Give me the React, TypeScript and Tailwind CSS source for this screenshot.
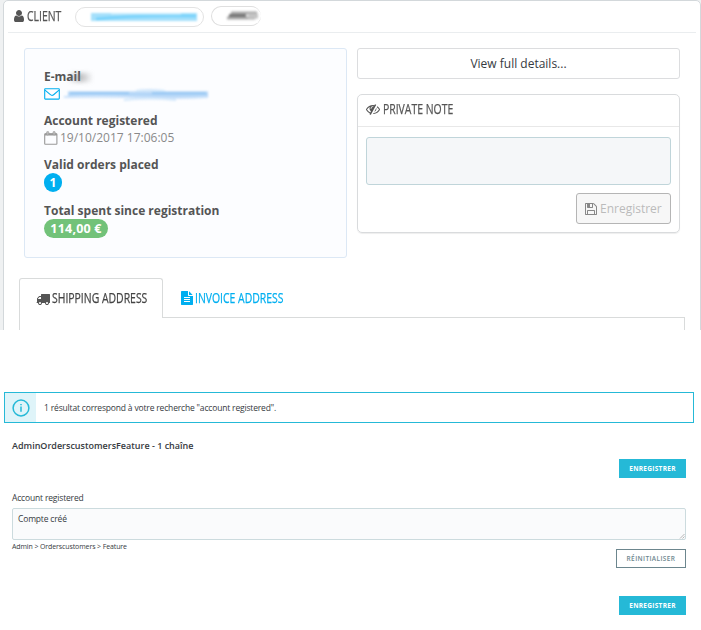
import type { ReactNode } from "react";
import clsx from "clsx";

const ICONS = {
  user: "M1536 1399q0 109-62.5 187t-150.5 78h-854q-88 0-150.5-78t-62.5-187q0-85 8.5-160.5t31.5-152 58.5-131 94-89 134.5-34.5q131 128 313 128t313-128q76 0 134.5 34.5t94 89 58.5 131 31.5 152 8.5 160.5zm-256-887q0 159-112.5 271.5t-271.5 112.5-271.5-112.5-112.5-271.5 112.5-271.5 271.5-112.5 271.5 112.5 112.5 271.5z",
  truck: "M640 1408q0-52-38-90t-90-38-90 38-38 90 38 90 90 38 90-38 38-90zm-384-512h384v-256h-158q-13 0-22 9l-195 195q-9 9-9 22v30zm1280 512q0-52-38-90t-90-38-90 38-38 90 38 90 90 38 90-38 38-90zm256-1088v1024q0 15-4 26.5t-13.5 18.5-16.5 11.5-23.5 6-22.5 2-25.5 0-22.5-.5q0 106-75 181t-181 75-181-75-75-181h-384q0 106-75 181t-181 75-181-75-75-181h-64q-3 0-22.5.5t-25.5 0-22.5-2-23.5-6-16.5-11.5-13.5-18.5-4-26.5q0-26 19-45t45-19v-320q0-8-.5-35t0-38 2.5-34.5 6.5-37 14-30.5 22.5-30l198-198q19-19 50.5-32t58.5-13h160v-192q0-26 19-45t45-19h1024q26 0 45 19t19 45z",
  save: "M512 1536h768v-384h-768v384zm896 0h128v-896q0-14-10-38.5t-20-34.5l-281-281q-10-10-34-20t-39-10v416q0 40-28 68t-68 28h-576q-40 0-68-28t-28-68v-416h-128v1280h128v-416q0-40 28-68t68-28h832q40 0 68 28t28 68v416zm-384-928v-320q0-13-9.5-22.5t-22.5-9.5h-192q-13 0-22.5 9.5t-9.5 22.5v320q0 13 9.5 22.5t22.5 9.5h192q13 0 22.5-9.5t9.5-22.5zm640 32v928q0 40-28 68t-68 28h-1344q-40 0-68-28t-28-68v-1344q0-40 28-68t68-28h928q40 0 88 20t76 48l280 280q28 28 48 76t20 88z",
  file: "M1596 476q14 14 28 36h-472v-472q22 14 36 28zm-476 164h544v1056q0 40-28 68t-68 28h-1344q-40 0-68-28t-28-68v-1600q0-40 28-68t68-28h800v544q0 40 28 68t68 28zm160 736v-64q0-14-9-23t-23-9h-704q-14 0-23 9t-9 23v64q0 14 9 23t23 9h704q14 0 23-9t9-23zm0-256v-64q0-14-9-23t-23-9h-704q-14 0-23 9t-9 23v64q0 14 9 23t23 9h704q14 0 23-9t9-23zm0-256v-64q0-14-9-23t-23-9h-704q-14 0-23 9t-9 23v64q0 14 9 23t23 9h704q14 0 23-9t9-23z",
  eyeOff: "M555 1335l78-141q-87-63-136-159t-49-203q0-121 61-225-229 117-381 353 167 258 427 375zm389-759q0-20-14-34t-34-14q-125 0-214.5 89.5t-89.5 214.5q0 20 14 34t34 14 34-14 14-34q0-86 61-147t147-61q20 0 34-14t14-34zm363-191q0 7-1 9-106 189-316 567t-315 566l-49 89q-10 16-28 16-12 0-134-70-16-10-16-28 0-12 44-87-143-65-263.5-173t-208.5-245q-20-31-20-69t20-69q153-235 380-371t496-136q89 0 180 17l54-97q10-16 28-16 5 0 18 6t31 15.5 33 18.5 31.5 18.5 19.5 11.5q16 10 16 27zm37 447q0 139-79 253.5t-209 164.5l280-502q8 45 8 84zm448 128q0 35-20 69-39 64-109 145-150 172-347.5 267t-419.5 95l74-132q212-18 392.5-137t301.5-307q-115-179-282-294l63-112q95 64 182.5 153t144.5 184q20 34 20 69z",
};

function Icon({ name, className }: { name: keyof typeof ICONS; className?: string }) {
  return (
    <svg viewBox="0 0 1792 1792" fill="currentColor" className={clsx("shrink-0", className)}>
      <path d={ICONS[name]} />
    </svg>
  );
}

// Narrow uppercase title, squeezed horizontally
function Condensed({ children, className }: { children: ReactNode; className?: string }) {
  return (
    <span className={clsx("block", className)}>
      <span className="inline-block origin-left scale-x-[0.745] whitespace-nowrap text-[14px] font-medium leading-5 [-webkit-text-stroke:0.25px_currentColor]">
        {children}
      </span>
    </span>
  );
}

function SaveButton() {
  return (
    <button className="h-[19px] w-[67px] bg-[#25b9d7] text-center text-[6.5px] font-bold leading-[19px] tracking-[0.3px] text-white">
      ENREGISTRER
    </button>
  );
}

function Label({ children, className }: { children: ReactNode; className?: string }) {
  return <div className={clsx("h-[18px] font-bold leading-5", className)}>{children}</div>;
}

function CustomerInfo() {
  return (
    <div className="h-[210px] w-[323px] rounded-[3px] border border-[#dce8f5] bg-[#fcfdff] pl-[19px] pt-[18px] text-[12px] leading-[18px] text-[#555]">
      <div className="relative w-[60px]">
        <Label>E-mail</Label>
        <span className="absolute left-[23px] top-[6px] h-[9px] w-[26px] bg-gradient-to-r from-transparent via-[#777]/50 to-transparent blur-[2px]" />
      </div>
      <div className="flex h-[18px] items-center">
        <svg viewBox="0 0 16 12" className="h-3 w-4" fill="none" stroke="#00aff0" strokeWidth="1.1">
          <rect x="0.7" y="0.7" width="14.6" height="10.4" rx="0.6" />
          <path d="M1 2.2 6.4 6.7Q8 8 9.6 6.7L15 2.2" />
        </svg>
        <svg viewBox="0 0 150 14" className="ml-1 h-[14px] w-[150px] overflow-visible" fill="none">
          <g className="blur-[0.8px]">
            <path d="M4 7.5H144" stroke="#b4d6f7" strokeWidth="6" />
            <path d="M0 10Q30 8 70 10T143 10" stroke="#cbe2fb" strokeWidth="2" />
            <path d="M6 6H65M88 6H142" stroke="#86c0f2" strokeWidth="1.5" />
            <path d="M72 4Q84 2 101 4M60 13Q86 10 112 13" stroke="#d3e8fb" strokeWidth="2" />
          </g>
        </svg>
      </div>

      <Label className="mt-2">Account registered</Label>
      <div className="flex h-[18px] items-center text-[#8a8a8a]">
        <svg viewBox="0 0 14 14" className="mr-[2px] h-[14px] w-[14px]">
          <rect x="0.7" y="2.7" width="12.2" height="10.6" rx="0.6" fill="none" stroke="#999" strokeWidth="1.1" />
          <path d="M1 2.5h12v2H1z" fill="#999" />
          <rect x="2.6" y="0.4" width="2.2" height="3.6" rx="1" fill="#bbb" stroke="#999" strokeWidth="0.6" />
          <rect x="9" y="0.4" width="2.2" height="3.6" rx="1" fill="#bbb" stroke="#999" strokeWidth="0.6" />
        </svg>
        19/10/2017 17:06:05
      </div>

      <Label className="mt-2">Valid orders placed</Label>
      <div className="flex h-[19px] w-[18px] items-center justify-center rounded-full bg-[#00aff0] text-[12px] font-bold text-white">1</div>

      <Label className="mt-[9px]">Total spent since registration</Label>
      <div className="flex h-[19px] w-16 items-center justify-center rounded-full bg-[#72c279] text-[12.5px] font-bold tracking-[0.2px] text-white">114,00 €</div>
    </div>
  );
}

function PrivateNote() {
  return (
    <div className="mt-[15px] h-[139px] w-[323px] rounded-[5px] border border-[#d9dbdd] shadow-[0_1px_1px_#eee]">
      <div className="flex h-8 items-center border-b border-[#e8e8e8] pl-2 text-[#555]">
        <Icon name="eyeOff" className="mb-[3px] mr-[3px] h-[14px] w-[14px]" />
        <Condensed className="pb-[5px]">PRIVATE NOTE</Condensed>
      </div>
      <div className="flex flex-col items-end px-2 pt-[10px]">
        <div className="h-12 w-[305px] rounded-[3px] border border-[#c0d5da] bg-[#f5f7f9]" />
        <button className="mt-2 flex h-[31px] w-[95px] items-center rounded-[3px] border border-[#b5b5b5] bg-[#f7f7f7] pl-[7px] text-[12px] text-[#bbb]">
          <Icon name="save" className="mr-[2px] h-[14px] w-[14px] text-[#888]" />
          Enregistrer
        </button>
      </div>
    </div>
  );
}

function ClientPanel() {
  return (
    <section className="h-[330px] overflow-hidden bg-[#eff1f2] pl-[3px]">
      <div className="h-[340px] w-[698px] rounded-[5px] border border-[#d3d8db] bg-white">
        <header className="mx-1 flex h-8 items-center border-b border-[#eaedef] pl-[5px] text-[#555]">
          <Icon name="user" className="-ml-px mb-[2px] mr-[1px] h-[14px] w-[14px]" />
          <Condensed className="w-12 pb-[3px]">CLIENT</Condensed>
          <div className="flex h-5 w-[129px] items-center rounded-full border border-[#e3e3e3] pl-[15px]">
            <svg viewBox="0 0 110 12" className="h-3 w-[110px] overflow-visible" fill="none">
              <g className="blur-[1px]">
                <path d="M0 6H106" stroke="#a5e0fb" strokeWidth="8" />
                <path d="M5 8Q45 4 105 5" stroke="#74d1fb" strokeWidth="2.5" />
                <path d="M20 3H90" stroke="#c0e9fc" strokeWidth="2" />
              </g>
            </svg>
          </div>
          <div className="-mt-[2px] ml-[7px] flex h-5 w-[50px] items-center rounded-[10px] border border-r-0 border-[#dfdfdf] pl-[14px]">
            <svg viewBox="0 0 36 12" className="h-3 w-9 overflow-visible" fill="none">
              <g className="blur-[1.2px]">
                <path d="M5 3H31M1 8H29" stroke="#aaa" strokeWidth="3" />
                <path d="M3 5.5H20" stroke="#777" strokeWidth="3" />
                <path d="M22 6H32" stroke="#c4c4c4" strokeWidth="5" />
              </g>
            </svg>
          </div>
        </header>

        <div className="flex gap-[10px] pl-5 pt-[15px]">
          <CustomerInfo />
          <div>
            <button className="block h-[31px] w-[323px] rounded-[3px] border border-[#dcdddf] text-center text-[12px] text-[#363a41]">
              View full details...
            </button>
            <PrivateNote />
          </div>
        </div>

        <div className="mt-5 flex pl-[15px]">
          <div className="flex h-[40px] w-36 items-center rounded-t-[3px] border border-b-0 border-[#d9dbdb] pl-4 text-[#444]">
            <Icon name="truck" className="mr-[2px] h-[14px] w-[14px] text-[#555]" />
            <Condensed className="pb-[3px]">SHIPPING ADDRESS</Condensed>
          </div>
          <div className="flex w-[522px] items-center border-b border-[#d9dbdb] pl-[17px] text-[#00aff0]">
            <Icon name="file" className="mr-[1px] h-[14px] w-[14px]" />
            <Condensed className="pb-[2px]">INVOICE ADDRESS</Condensed>
          </div>
        </div>
        <div className="ml-[15px] h-5 w-[666px] border-x border-[#d9dbdb]" />
      </div>
    </section>
  );
}

function TranslationSearch() {
  return (
    <section className="mt-[62px] text-[#363a41]">
      <div className="ml-1 flex h-[31px] w-[690px] items-center border border-[#25b9d7]">
        <div className="flex h-full w-[31px] items-center justify-center bg-[#dff4f9]">
          <svg viewBox="0 0 18 18" className="h-[18px] w-[18px]" fill="none" stroke="#25b9d7">
            <circle cx="9" cy="9" r="7.9" strokeWidth="1.5" />
            <path d="M9 7.6v5.2M9 4.9v1.4" strokeWidth="1.5" />
          </svg>
        </div>
        <p className="pl-2 text-[8.5px] leading-3 tracking-[-0.17px]">1 résultat correspond à votre recherche "account registered".</p>
      </div>

      <div className="ml-3 flex w-[674px] flex-col">
        <h2 className="mt-4 text-[9px] font-semibold leading-[14px]">AdminOrderscustomersFeature - 1 chaîne</h2>
        <div className="mt-[6px] flex h-[20px] justify-end">
          <SaveButton />
        </div>
        <label className="mt-[13px] text-[8.5px] leading-3 tracking-[-0.17px]">Account registered</label>
        <div className="relative mt-1 h-8 rounded-[2px] border border-[#ccdbde] bg-[#fafbfc] pl-[5px] pt-1 text-[8.5px] leading-3 tracking-[-0.17px]">
          Compte créé
          <svg viewBox="0 0 6 6" className="absolute bottom-0 right-0 h-[6px] w-[6px]" stroke="#999" strokeWidth="0.7">
            <path d="M1 5.5 5.5 1M3.5 5.5l2-2" />
          </svg>
        </div>
        <div className="flex justify-between">
          <span className="mt-px text-[7px] leading-3 tracking-[-0.11px]">Admin &gt; Orderscustomers &gt; Feature</span>
          <button className="mt-[9px] h-[19px] w-[70px] border border-[#6c868e] text-center text-[6.5px] font-semibold leading-[17px] tracking-[0.4px] text-[#6c868e]">
            RÉINITIALISER
          </button>
        </div>
        <div className="mt-7 flex justify-end">
          <SaveButton />
        </div>
      </div>
    </section>
  );
}

export default function App() {
  return (
    <main className="h-[630px] w-[701px] overflow-hidden bg-white font-['Open_Sans',sans-serif]">
      <ClientPanel />
      <TranslationSearch />
    </main>
  );
}
